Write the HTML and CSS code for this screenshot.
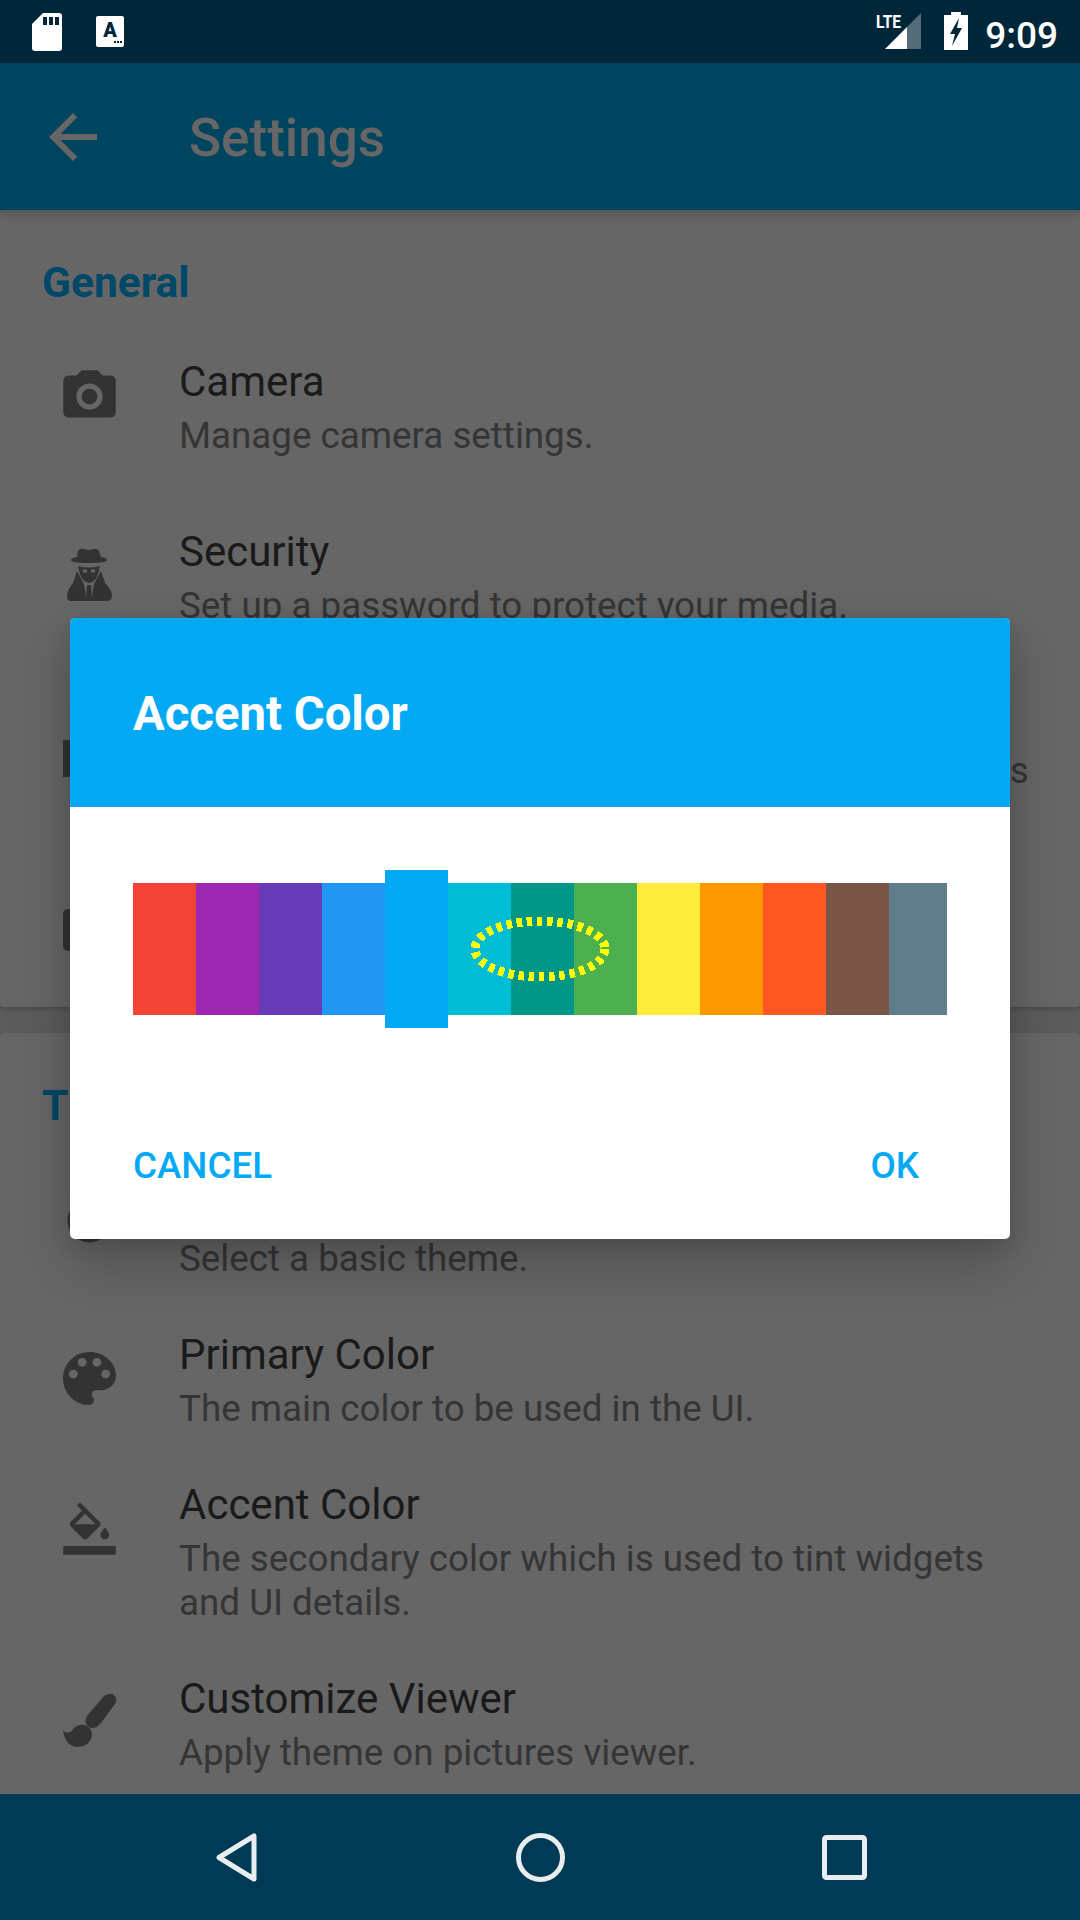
FILE: index.html
```html
<!DOCTYPE html>
<html lang="en">
<head>
    <meta charset="UTF-8">
    <meta name="viewport" content="width=device-width, initial-scale=1.0">
    <title>Settings</title>
    <link rel="stylesheet" href="styles.css">
</head>
<body>
<div class="screen">

    <!-- Status bar -->
    <div class="status-bar">
        <svg class="sd-icon" width="30" height="38" viewBox="0 0 30 38">
            <path d="M11 0H27Q30 0 30 3V35Q30 38 27 38H3Q0 38 0 35V11Z" fill="#fff"/>
            <path d="M11 4h4v8h-4zM17 4h4v8h-4zM23 4h4v8h-4z" fill="#002739"/>
        </svg>
        <div class="font-note">
            <span class="font-note-letter">A</span>
            <span class="font-note-dots"><i></i><i></i><i></i></span>
        </div>
        <div class="status-right">
            <svg width="48" height="38" viewBox="0 0 48 38">
                <path d="M1 37L23 15V37Z" fill="#fff"/>
                <path d="M23 15L37 1V37H23Z" fill="#fff" fill-opacity="0.32"/>
                <text class="lte-text" x="-8" y="16" textLength="25" lengthAdjust="spacingAndGlyphs">LTE</text>
            </svg>
            <svg class="battery-icon" width="24" height="38" viewBox="0 0 24 38">
                <path d="M7 0H17V3H24V38H0V3H7Z" fill="#fff"/>
                <path d="M15 6L6 22H11L8 34L18 16H13Z" fill="#002739"/>
            </svg>
            <span class="clock">9:09</span>
        </div>
    </div>

    <!-- Toolbar -->
    <header class="toolbar">
        <svg class="back-arrow" width="72" height="72" viewBox="0 0 24 24">
            <path d="M20 11H7.83l5.59-5.59L12 4l-8 8 8 8 1.41-1.41L7.83 13H20v-2z" fill="#666"/>
        </svg>
        <h1>Settings</h1>
    </header>

    <main class="content">
        <section class="card card-general">
            <h2>General</h2>

            <div class="row row-wide">
                <svg class="row-icon icon-camera" viewBox="0 0 24 24">
                    <path d="M4,4H7L9,2H15L17,4H20A2,2 0 0,1 22,6V18A2,2 0 0,1 20,20H4A2,2 0 0,1 2,18V6A2,2 0 0,1 4,4M12,7A5,5 0 0,0 7,12A5,5 0 0,0 12,17A5,5 0 0,0 17,12A5,5 0 0,0 12,7M12,9A3,3 0 0,1 15,12A3,3 0 0,1 12,15A3,3 0 0,1 9,12A3,3 0 0,1 12,9Z"/>
                </svg>
                <div class="row-text">
                    <div class="row-title">Camera</div>
                    <div class="row-summary">Manage camera settings.</div>
                </div>
            </div>

            <div class="row row-wide">
                <svg class="row-icon icon-spy" viewBox="58 204 63 63">
                    <path d="M78 212Q80 209 84 210Q89 212 93 210Q97 209 99 212L101 218Q107 219 107 221Q107 224 89 224Q71 224 71 221Q71 219 77 218Z"/>
                    <path d="M78 227Q89 230 100 227L98 235Q96 243 89 244Q82 243 80 235Z"/>
                    <path d="M77 232L84 245L87 262H71Q67 262 67 257Q67 251 73 244ZM101 232L94 245L91 262H107Q112 262 112 257Q112 251 105 244Z"/>
                    <path d="M83 232H87M91 232H95" stroke="#666" stroke-width="3"/>
                    <path d="M87 246H91L92 262H86Z"/>
                </svg>
                <div class="row-text">
                    <div class="row-title">Security</div>
                    <div class="row-summary">Set up a password to protect your media.</div>
                </div>
            </div>

            <div class="row row-wide row-folders">
                <svg class="row-icon icon-folder" viewBox="0 0 63 63">
                    <rect x="5" y="26" width="53" height="41"/>
                </svg>
                <div class="row-text">
                    <div class="row-title">Folders</div>
                    <div class="row-summary">Choose the folders shown with all your own pictures</div>
                </div>
            </div>

            <div class="row">
                <svg class="row-icon icon-album" viewBox="0 0 63 63">
                    <rect x="5" y="16" width="53" height="42" rx="5"/>
                </svg>
                <div class="row-text">
                    <div class="row-title">Albums</div>
                    <div class="row-summary">Manage album settings.</div>
                </div>
            </div>
        </section>

        <section class="card">
            <h2>Theme</h2>

            <div class="row">
                <svg class="row-icon icon-theme" viewBox="0 0 63 63">
                    <circle cx="31.5" cy="31.5" r="22"/>
                </svg>
                <div class="row-text">
                    <div class="row-title">Base Theme</div>
                    <div class="row-summary">Select a basic theme.</div>
                </div>
            </div>

            <div class="row">
                <svg class="row-icon icon-palette" viewBox="1.3 1.3 21.4 21.4">
                    <path d="M12 3c-4.97 0-9 4.03-9 9s4.03 9 9 9c.83 0 1.5-.67 1.5-1.5 0-.39-.15-.74-.39-1.01-.23-.26-.38-.61-.38-.99 0-.83.67-1.5 1.5-1.5H16c2.76 0 5-2.24 5-5 0-4.42-4.03-8-9-8zm-5.5 9c-.83 0-1.5-.67-1.5-1.5S5.67 9 6.5 9 8 9.67 8 10.5 7.33 12 6.5 12zm3-4C8.67 8 8 7.33 8 6.5S8.67 5 9.5 5s1.5.67 1.5 1.5S10.33 8 9.5 8zm5 0c-.83 0-1.5-.67-1.5-1.5S13.67 5 14.5 5s1.5.67 1.5 1.5S15.33 8 14.5 8zm3 4c-.83 0-1.5-.67-1.5-1.5S16.67 9 17.5 9s1.5.67 1.5 1.5-.67 1.5-1.5 1.5z"/>
                </svg>
                <div class="row-text">
                    <div class="row-title">Primary Color</div>
                    <div class="row-summary">The main color to be used in the UI.</div>
                </div>
            </div>

            <div class="row">
                <svg class="row-icon icon-fill" viewBox="-2.4 -2.4 28.8 28.8">
                    <path d="M16.56 8.94L7.62 0 6.21 1.41l2.38 2.38-5.15 5.15c-.59.59-.59 1.54 0 2.12l5.5 5.5c.29.29.68.44 1.06.44s.77-.15 1.06-.44l5.5-5.5c.59-.58.59-1.53 0-2.12zM5.21 10L10 5.21 14.79 10H5.21zM19 11.5s-2 2.17-2 3.5c0 1.1.9 2 2 2s2-.9 2-2c0-1.33-2-3.5-2-3.5zM0 20h24v4H0z"/>
                </svg>
                <div class="row-text">
                    <div class="row-title">Accent Color</div>
                    <div class="row-summary">The secondary color which is used to tint widgets and UI details.</div>
                </div>
            </div>

            <div class="row">
                <svg class="row-icon icon-brush" viewBox="18 28 63 63">
                    <path d="M64 35Q70 31 74 34Q78 38 75 43L61 62Q55 69 49 66Q43 62 47 55Z"/>
                    <path d="M23 70Q30 74 33 68Q38 63 45 64Q53 67 52 75Q50 85 38 86Q26 86 23 70Z"/>
                </svg>
                <div class="row-text">
                    <div class="row-title">Customize Viewer</div>
                    <div class="row-summary">Apply theme on pictures viewer.</div>
                </div>
            </div>
        </section>
    </main>

    <!-- Navigation bar -->
    <nav class="nav-bar">
        <div class="nav-item">
            <svg width="63" height="63" viewBox="0 0 63 63"><path d="M49 10V53L14 31.5Z"/></svg>
        </div>
        <div class="nav-item">
            <svg width="63" height="63" viewBox="0 0 63 63"><circle cx="31.5" cy="31.5" r="22"/></svg>
        </div>
        <div class="nav-item">
            <svg width="63" height="63" viewBox="0 0 63 63"><rect x="11.5" y="11.5" width="40" height="40" rx="2"/></svg>
        </div>
    </nav>

    <!-- Accent color dialog -->
    <div class="dialog">
        <div class="dialog-header">Accent Color</div>
        <div class="palette">
            <div class="swatch swatch-red"></div>
            <div class="swatch swatch-purple"></div>
            <div class="swatch swatch-indigo"></div>
            <div class="swatch swatch-blue"></div>
            <div class="swatch swatch-sky selected"></div>
            <div class="swatch swatch-cyan"></div>
            <div class="swatch swatch-teal"></div>
            <div class="swatch swatch-green"></div>
            <div class="swatch swatch-yellow"></div>
            <div class="swatch swatch-orange"></div>
            <div class="swatch swatch-deep-orange"></div>
            <div class="swatch swatch-brown"></div>
            <div class="swatch swatch-grey"></div>
            <svg class="marker" width="150" height="76" viewBox="0 0 150 76">
                <ellipse cx="75" cy="38" rx="65" ry="28"/>
            </svg>
        </div>
        <div class="dialog-actions">
            <span class="dialog-button">CANCEL</span>
            <span class="dialog-button">OK</span>
        </div>
    </div>

</div>
</body>
</html>
```

FILE: styles.css
```css
body {
    margin: 0;
    padding: 0;
    font-family: Roboto, "Liberation Sans", sans-serif;
}

.screen {
    position: relative;
    width: 1080px;
    height: 1920px;
    display: flex;
    flex-direction: column;
    overflow: hidden;
    background-color: #5c5c5c;
}

/* Status bar */
.status-bar {
    height: 63px;
    flex-shrink: 0;
    display: flex;
    align-items: flex-start;
    padding: 0 22px 0 32px;
    background-color: #002739;
}

.sd-icon {
    margin-top: 13px;
}

.font-note {
    width: 28px;
    height: 31px;
    margin: 16px 0 0 34px;
    position: relative;
    border-radius: 2px;
    background-color: #fff;
    color: #002739;
    text-align: center;
}

.font-note-letter {
    display: block;
    font-size: 20px;
    font-weight: 900;
    line-height: 22px;
    padding-top: 3px;
}

.font-note-dots {
    display: flex;
    justify-content: flex-end;
    gap: 1px;
    padding-right: 2px;
}

.font-note-dots i {
    width: 2px;
    height: 2px;
    background-color: #002739;
}

.status-right {
    margin-left: auto;
    display: flex;
    align-items: flex-start;
}

.status-right svg {
    margin-top: 12px;
    overflow: visible;
}

.lte-text {
    font-size: 19px;
    font-weight: 700;
    fill: #fff;
}

.battery-icon {
    margin-left: 12px;
}

.clock {
    margin-left: 17px;
    padding-top: 14px;
    font-size: 37px;
    line-height: 43px;
    font-weight: 500;
    color: #fff;
}

/* Toolbar */
.toolbar {
    height: 147px;
    flex-shrink: 0;
    display: flex;
    align-items: center;
    background-color: #004560;
    box-shadow: 0 4px 10px rgba(0, 0, 0, 0.2);
    position: relative;
    z-index: 1;
}

.back-arrow {
    margin-left: 37px;
}

.toolbar h1 {
    margin: 0 0 0 80px;
    padding-top: 2px;
    font-size: 53px;
    font-weight: 500;
    color: #666;
}

/* Settings list */
.content {
    flex: 1;
    min-height: 0;
    overflow: hidden;
}

.card {
    background-color: #666;
    border-radius: 4px;
    box-shadow: 0 2px 5px rgba(0, 0, 0, 0.2);
    margin-bottom: 26px;
    padding-top: 48px;
}

.card-general {
    height: 749px;
}

.card h2 {
    margin: 0 0 24px 42px;
    font-size: 42.5px;
    line-height: 50px;
    font-weight: 700;
    color: #004868;
}

.row {
    display: flex;
    align-items: flex-start;
    padding: 25px 42px 24px 58px;
}

.row-wide {
    padding-bottom: 44px;
}

.row-folders .row-summary {
    margin-top: 2px;
    padding-bottom: 5px;
}

.row-icon {
    width: 63px;
    height: 63px;
    flex-shrink: 0;
    margin-right: 58px;
    margin-top: 17px;
    fill: #333;
}

.icon-camera {
    margin-top: 8px;
}

.icon-spy {
    margin-top: 16px;
}

.icon-theme {
    margin-top: 9px;
}

.icon-album {
    margin-top: 26px;
}

.icon-brush {
    margin-top: 15px;
}

.row-title {
    font-size: 42px;
    line-height: 50px;
    color: #1a1a1a;
}

.row-summary {
    margin-top: 7px;
    font-size: 36.75px;
    line-height: 44px;
    color: #353535;
}

/* Navigation bar */
.nav-bar {
    height: 126px;
    flex-shrink: 0;
    display: flex;
    justify-content: center;
    align-items: center;
    background-color: #003a54;
    position: relative;
    z-index: 1;
}

.nav-item {
    width: 304px;
    display: flex;
    justify-content: center;
}

.nav-item svg {
    display: block;
    fill: none;
    stroke: #e8edf0;
    stroke-width: 5;
    stroke-linejoin: round;
}

/* Dialog */
.dialog {
    position: absolute;
    left: 70px;
    top: 618px;
    width: 940px;
    z-index: 2;
    border-radius: 5px;
    background-color: #fff;
    box-shadow: 0 24px 60px rgba(0, 0, 0, 0.22), 0 8px 20px rgba(0, 0, 0, 0.1);
}

.dialog-header {
    height: 189px;
    box-sizing: border-box;
    padding: 3px 63px 0;
    display: flex;
    align-items: center;
    border-radius: 5px 5px 0 0;
    background-color: #03a9f4;
    color: #fff;
    font-size: 47.25px;
    font-weight: 700;
}

.palette {
    position: relative;
    display: flex;
    height: 132px;
    margin: 76px 63px 0;
}

.swatch {
    width: 63px;
    flex-shrink: 0;
}

.swatch.selected {
    margin: -13px 0;
}

.swatch-grey {
    width: 58px;
}

.swatch-red { background-color: #f44336; }
.swatch-purple { background-color: #9c27b0; }
.swatch-indigo { background-color: #673ab7; }
.swatch-blue { background-color: #2196f3; }
.swatch-sky { background-color: #03a9f4; }
.swatch-cyan { background-color: #00bcd4; }
.swatch-teal { background-color: #009688; }
.swatch-green { background-color: #4caf50; }
.swatch-yellow { background-color: #ffeb3b; }
.swatch-orange { background-color: #ff9800; }
.swatch-deep-orange { background-color: #ff5722; }
.swatch-brown { background-color: #795548; }
.swatch-grey { background-color: #607d8b; }

.marker {
    position: absolute;
    left: 332px;
    top: 28px;
    fill: none;
    stroke: #ffff00;
    stroke-width: 9;
    stroke-dasharray: 5.6 4.6;
    shape-rendering: crispEdges;
}

.dialog-actions {
    display: flex;
    justify-content: space-between;
    padding: 0 91px 51px 63px;
    margin-top: 128px;
}

.dialog-button {
    font-size: 36.75px;
    line-height: 45px;
    font-weight: 500;
    color: #03a9f4;
}
```
